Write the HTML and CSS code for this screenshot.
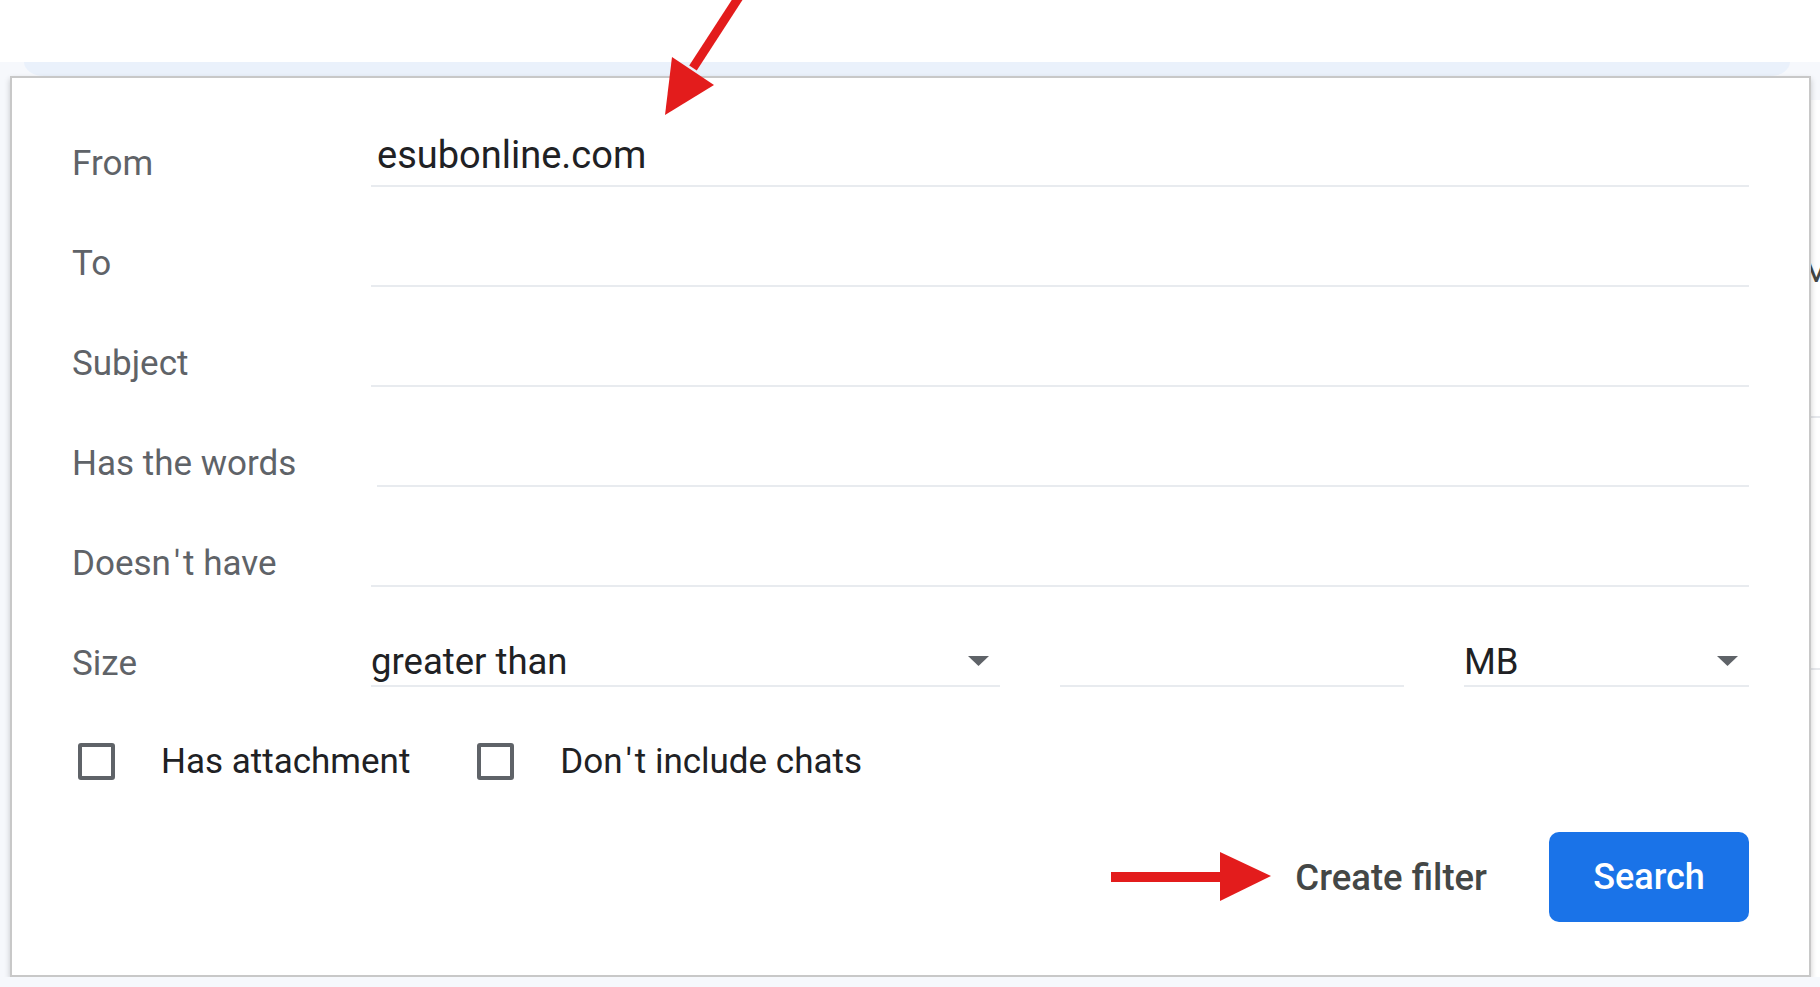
FILE: index.html
```html
<!DOCTYPE html>
<html lang="en">
<head>
    <meta charset="UTF-8">
    <meta name="viewport" content="width=device-width, initial-scale=1.0">
    <title>Search options</title>
    <link rel="stylesheet" href="styles.css">
</head>
<body>
    <div class="topbar"></div>

    <div class="band-row">
        <div class="search-band"></div>
    </div>

    <div class="stage">
        <!-- Advanced search panel -->
        <section class="search-panel">
            <form class="filter-form">
                <div class="field-row">
                    <label for="from">From</label>
                    <input type="text" id="from" class="field" value="esubonline.com">
                </div>
                <div class="field-row">
                    <label for="to">To</label>
                    <input type="text" id="to" class="field">
                </div>
                <div class="field-row">
                    <label for="subject">Subject</label>
                    <input type="text" id="subject" class="field">
                </div>
                <div class="field-row">
                    <label for="words">Has the words</label>
                    <input type="text" id="words" class="field field-shift">
                </div>
                <div class="field-row">
                    <label for="without">Doesn<span class="apos">'</span>t have</label>
                    <input type="text" id="without" class="field">
                </div>
                <div class="field-row">
                    <label>Size</label>
                    <div class="size-fields">
                        <div class="select">
                            <span>greater than</span>
                            <svg class="caret" width="21" height="10" viewBox="0 0 21 10"><path d="M0 0 H21 L10.5 10 Z" fill="#5f6368"/></svg>
                        </div>
                        <input type="text" class="field">
                        <div class="select">
                            <span>MB</span>
                            <svg class="caret" width="21" height="10" viewBox="0 0 21 10"><path d="M0 0 H21 L10.5 10 Z" fill="#5f6368"/></svg>
                        </div>
                    </div>
                </div>

                <div class="check-row">
                    <label class="check"><span class="box"></span>Has attachment</label>
                    <label class="check"><span class="box"></span>Don<span class="apos">'</span>t include chats</label>
                </div>

                <div class="actions">
                    <button type="button" class="text-btn">Create filter</button>
                    <button type="button" class="primary-btn">Search</button>
                </div>
            </form>
        </section>

        <div class="side-strip">
            <div class="side-top"></div>
            <div class="side-list">
                <span class="side-letter">M</span>
                <div class="side-line line-a"></div>
                <div class="side-line line-b"></div>
            </div>
        </div>
    </div>

    <!-- red annotation arrows -->
    <svg class="mark mark-down" width="90" height="120" viewBox="0 0 90 120">
        <line x1="83" y1="-6" x2="35" y2="68" stroke="#e31c1c" stroke-width="9"/>
        <polygon points="14,57 56,85 7,115" fill="#e31c1c"/>
    </svg>
    <svg class="mark mark-right" width="170" height="60" viewBox="0 0 170 60">
        <line x1="0" y1="30" x2="112" y2="30" stroke="#e31c1c" stroke-width="10"/>
        <polygon points="109,5 160,29 109,54" fill="#e31c1c"/>
    </svg>
</body>
</html>
```

FILE: styles.css
```css
body {
    margin: 0;
    background-color: #f6f8fc;
    font-family: Roboto, "Liberation Sans", sans-serif;
    color: #202124;
    overflow: hidden;
}

.topbar {
    height: 62px;
    background-color: #ffffff;
}

.band-row {
    height: 14px;
    padding: 0 30px 0 24px;
}

.search-band {
    height: 100%;
    background-color: #eaf1fb;
    border-radius: 0 0 20px 20px / 0 0 14px 14px;
}

.stage {
    display: flex;
}

.search-panel {
    box-sizing: border-box;
    width: 1801px;
    height: 901px;
    margin-left: 10px;
    background-color: #ffffff;
    border: 2px solid #c8c8c8;
    box-shadow: 0 3px 6px rgba(0, 0, 0, 0.2);
    position: relative;
    z-index: 1;
}

.filter-form {
    padding: 9px 60px 0 60px;
}

.field-row {
    display: grid;
    grid-template-columns: 299px 1fr;
    align-items: end;
    height: 100px;
}

.field-row label {
    font-size: 35px;
    line-height: 40px;
    color: #5f6368;
    margin-bottom: 3px;
}

.apos {
    padding: 0 3px;
}

.field {
    box-sizing: border-box;
    width: 100%;
    height: 58px;
    padding: 0 0 4px 6px;
    border: none;
    border-bottom: 2px solid #e8ebef;
    font-family: inherit;
    font-size: 38px;
    color: #202124;
    outline: none;
    background: transparent;
}

.field-shift {
    margin-left: 6px;
    width: calc(100% - 6px);
}

.size-fields {
    display: grid;
    grid-template-columns: 629px 344px 1fr;
    column-gap: 60px;
}

.select {
    box-sizing: border-box;
    height: 58px;
    display: flex;
    align-items: center;
    justify-content: space-between;
    border-bottom: 2px solid #e8ebef;
    font-size: 36.5px;
    color: #202124;
    padding: 8px 11px 0 0;
}

.check-row {
    display: flex;
    align-items: center;
    height: 40px;
    margin-top: 54px;
    padding-left: 6px;
}

.check {
    display: flex;
    align-items: center;
    font-size: 35px;
    color: #202124;
    margin-right: 67px;
}

.box {
    box-sizing: border-box;
    width: 37px;
    height: 37px;
    border: 4px solid #5f6368;
    border-radius: 3px;
    margin-right: 46px;
}

.actions {
    display: flex;
    justify-content: flex-end;
    align-items: center;
    gap: 62px;
    margin-top: 51px;
}

.text-btn {
    border: none;
    background: none;
    padding: 0;
    font-family: inherit;
    font-size: 36.5px;
    font-weight: 500;
    color: #444746;
}

.primary-btn {
    width: 200px;
    height: 90px;
    border: none;
    border-radius: 10px;
    background-color: #1a73e8;
    color: #ffffff;
    font-family: inherit;
    font-size: 36px;
    font-weight: 500;
}

.side-strip {
    flex: 1;
    display: flex;
    flex-direction: column;
    overflow: hidden;
}

.side-top {
    height: 24px;
}

.side-list {
    flex: 1;
    background-color: #ffffff;
}

.side-letter {
    display: block;
    margin: 150px 0 0 -10px;
    font-size: 35px;
    color: #444746;
}

.side-line {
    height: 2px;
    background-color: #e6e8ec;
}

.line-a {
    margin-top: 125px;
}

.line-b {
    margin-top: 250px;
}

.mark {
    position: absolute;
    z-index: 2;
}

.mark-down {
    left: 658px;
    top: 0;
}

.mark-right {
    left: 1111px;
    top: 847px;
}
```
